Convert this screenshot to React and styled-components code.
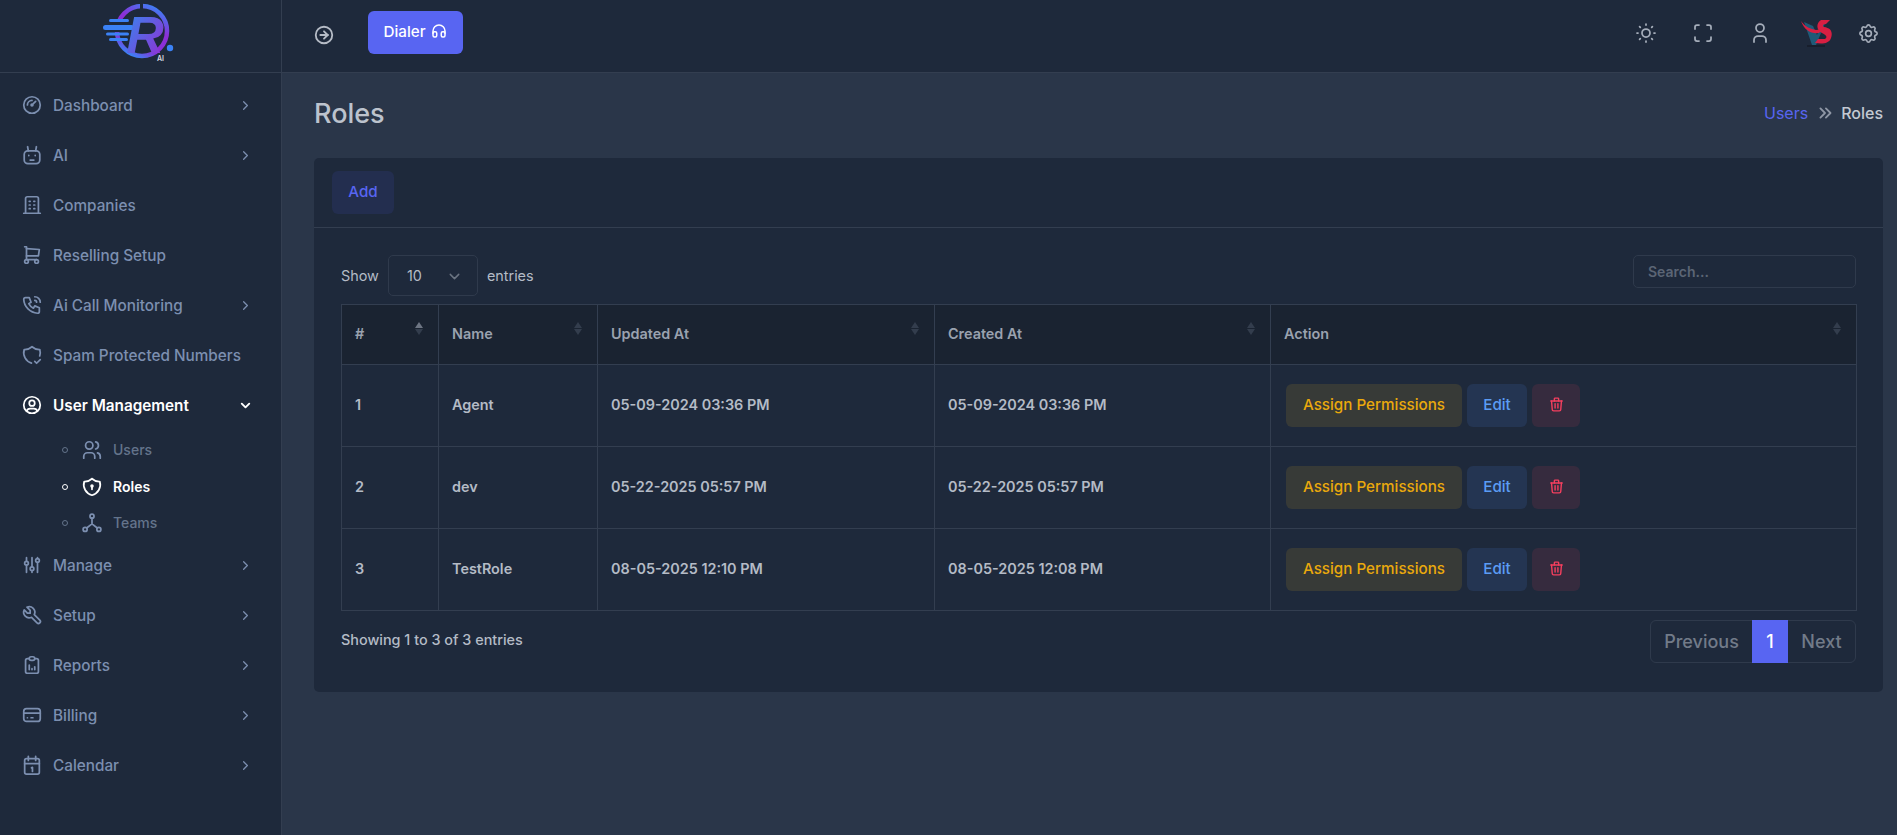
import styled, { createGlobalStyle } from "styled-components";
import {
  TbGauge,
  TbBuilding,
  TbShoppingCart,
  TbPhoneCall,
  TbShieldCheck,
  TbUserCircle,
  TbUsers,
  TbShieldLock,
  TbAdjustments,
  TbTool,
  TbReportAnalytics,
  TbCreditCard,
  TbChevronRight,
  TbChevronDown,
  TbChevronsRight,
  TbCircleArrowRight,
  TbHeadphones,
  TbSun,
  TbMaximize,
  TbUser,
  TbSettings,
  TbTrash,
} from "react-icons/tb";

const GlobalStyle = createGlobalStyle`
  html, body {
    margin: 0;
    padding: 0;
    background: #2a3649;
    font-family: "Inter", "Liberation Sans", sans-serif;
  }
  * { box-sizing: border-box; }
`;

const Shell = styled.div`
  display: grid;
  grid-template-columns: 282px 1fr;
  height: 835px;
  overflow: hidden;
`;

const Sidebar = styled.aside`
  background: #1e293b;
  border-right: 1px solid #333e50;
  display: flex;
  flex-direction: column;
`;

const Brand = styled.div`
  height: 73px;
  flex: none;
  border-bottom: 1px solid #333e50;
  display: flex;
  justify-content: center;
  padding-top: 3px;
`;

const Nav = styled.nav`
  padding-top: 7px;
  display: flex;
  flex-direction: column;
`;

const NavItem = styled.div`
  height: 50px;
  display: flex;
  align-items: center;
  padding: 0 28px 0 21px;
  color: ${(props) => (props.$active ? "#ffffff" : "#7c8fb0")};
  font-size: 15.3px;
  font-weight: ${(props) => (props.$active ? 600 : 500)};
  svg.lead {
    width: 22px;
    height: 22px;
    flex: none;
    margin-right: 10px;
    stroke-width: 1.9;
  }
`;

const NavLabel = styled.span`
  flex: 1;
`;

const SubList = styled.div`
  height: 110px;
  display: grid;
  grid-template-rows: 37px 37px 1fr;
  padding: 1px 0 0 62px;
`;

const SubItem = styled.div`
  display: flex;
  align-items: center;
  color: ${(props) => (props.$active ? "#ffffff" : "#64748b")};
  font-size: 14px;
  font-weight: ${(props) => (props.$active ? 600 : 500)};
  svg {
    width: 22px;
    height: 22px;
    margin-right: 10px;
    stroke-width: 1.9;
    color: ${(props) => (props.$active ? "#ffffff" : "#7c8fb0")};
  }
`;

const Dot = styled.span`
  width: 6px;
  height: 6px;
  border-radius: 50%;
  border: 1px solid currentColor;
  margin-right: 13px;
`;

const Main = styled.main`
  display: flex;
  flex-direction: column;
  min-width: 0;
`;

const Topbar = styled.header`
  height: 73px;
  flex: none;
  background: #1e293b;
  border-bottom: 1px solid #333e50;
  display: flex;
  align-items: flex-start;
  padding-left: 31px;
`;

const ToggleButton = styled.div`
  color: #b6bcc6;
  margin-top: 24px;
  margin-right: 33px;
  display: flex;
  svg {
    width: 22px;
    height: 22px;
    stroke-width: 2;
  }
`;

const DialerButton = styled.button`
  margin-top: 11px;
  width: 95px;
  height: 43px;
  background: #5865f2;
  border: none;
  border-radius: 6px;
  color: #ffffff;
  font: 500 15.2px "Inter", sans-serif;
  display: flex;
  align-items: center;
  justify-content: center;
  gap: 4px;
  padding-bottom: 4px;
  svg {
    width: 18px;
    height: 18px;
  }
`;

const TopActions = styled.div`
  margin-left: auto;
  display: flex;
  align-items: center;
  height: 66px;
  padding-right: 19px;
  color: #a5adba;
`;

const TopIcon = styled.div`
  width: 57px;
  display: flex;
  justify-content: center;
  svg {
    flex: none;
    stroke-width: 1.75;
  }
`;

const GearIcon = styled(TopIcon)`
  width: 20px;
  margin-left: 13px;
`;

const Content = styled.div`
  flex: 1;
  padding: 0 14px 0 32px;
`;

const PageHead = styled.div`
  height: 85px;
  display: flex;
  align-items: center;
  justify-content: space-between;
  padding-bottom: 5px;
`;

const Title = styled.h1`
  margin: 0;
  font-size: 27px;
  font-weight: 500;
  color: #bcc3cd;
`;

const Crumbs = styled.div`
  display: flex;
  align-items: center;
  font-size: 16px;
  font-weight: 500;
  color: #c3c9d2;
`;

const CrumbLink = styled.span`
  color: #5865f2;
  font-weight: 400;
`;

const CrumbSep = styled.span`
  display: flex;
  margin: 0 5px 0 6px;
  color: #8f97a5;
  svg {
    width: 22px;
    height: 22px;
  }
`;

const Card = styled.section`
  height: 534px;
  background: #1e293b;
  border-radius: 5px;
`;

const CardTop = styled.div`
  height: 70px;
  border-bottom: 1px solid #333e50;
  padding: 13px 18px;
`;

const SoftButton = styled.button`
  height: 43px;
  width: ${(props) => props.$w}px;
  padding: 0 0 2px;
  border: none;
  border-radius: 6px;
  background: ${(props) => props.$bg};
  color: ${(props) => props.$fg};
  font: 500 15.2px "Inter", sans-serif;
  display: inline-flex;
  align-items: center;
  justify-content: center;
  flex: none;
  svg {
    width: 17px;
    height: 17px;
  }
`;

const CardBody = styled.div`
  padding: 27px 27px 0;
`;

const Controls = styled.div`
  height: 49px;
  display: flex;
  justify-content: space-between;
  align-items: flex-start;
`;

const LengthControl = styled.label`
  display: flex;
  align-items: center;
  height: 41px;
  gap: 9px;
  font-size: 14.4px;
  color: #b4bbc6;
`;

const Select = styled.div`
  width: 90px;
  height: 41px;
  border: 1px solid #2f3a4c;
  border-radius: 5px;
  display: flex;
  align-items: center;
  justify-content: space-between;
  padding: 0 14px 0 18px;
  color: #b4bbc6;
  svg {
    width: 17px;
    height: 17px;
    color: #6b7482;
    margin-top: 2px;
  }
`;

const SearchBox = styled.input`
  width: 223px;
  height: 33px;
  background: transparent;
  border: 1px solid #2f3a4c;
  border-radius: 5px;
  padding: 0 14px;
  font: 600 14px "Inter", sans-serif;
  color: #b4bbc6;
  &::placeholder {
    color: #5b6575;
    opacity: 1;
  }
`;

const Table = styled.table`
  width: 1515px;
  border-collapse: collapse;
  table-layout: fixed;
  font-size: 14.4px;
`;

const Th = styled.th`
  position: relative;
  height: 60px;
  padding: 0 13px 2px;
  text-align: left;
  font-weight: 600;
  color: #9aa2af;
  background: #1a2331;
  border: 1px solid #333e50;
`;

const SortMark = styled.span`
  position: absolute;
  right: 15px;
  top: 17px;
  display: flex;
  flex-direction: column;
  gap: 1px;
`;

const Arrow = styled.i`
  width: 0;
  height: 0;
  border-left: 4.5px solid transparent;
  border-right: 4.5px solid transparent;
  ${(props) => (props.$up ? "border-bottom" : "border-top")}: 6px solid
    ${(props) => (props.$on ? "#6d7583" : "#333d4d")};
`;

const Td = styled.td`
  height: 82px;
  padding: 0 13px 2px;
  font-weight: 600;
  color: #b4bbc6;
  border: 1px solid #333e50;
`;

const ActionCell = styled(Td)`
  padding: 0 15px;
`;

const ActionRow = styled.div`
  display: flex;
  gap: 5px;
  padding-bottom: 1px;
`;

const TableFooter = styled.div`
  display: flex;
  justify-content: space-between;
  align-items: flex-start;
  padding-top: 9px;
  font-size: 14.4px;
  font-weight: 500;
  color: #b4bbc6;
`;

const EntriesNote = styled.div`
  padding-top: 11px;
`;

const Pager = styled.div`
  height: 43px;
  display: flex;
  border: 1px solid #2f3a4c;
  border-radius: 6px;
  font-size: 18px;
  font-weight: 500;
  color: #727b89;
`;

const PageCell = styled.div`
  height: 43px;
  margin-top: -1px;
  padding-bottom: 1px;
  width: ${(props) => props.$w}px;
  display: flex;
  align-items: center;
  justify-content: center;
  background: ${(props) => (props.$on ? "#5865f2" : "transparent")};
  color: ${(props) => (props.$on ? "#ffffff" : "inherit")};
`;

const Logo = () => (
  <svg width="76" height="62" viewBox="0 0 76 62">
    <defs>
      <linearGradient id="ringGrad" x1="0.8" y1="0" x2="0.3" y2="1">
        <stop offset="0" stopColor="#3b82f6" />
        <stop offset="0.4" stopColor="#8b2fd6" />
        <stop offset="0.75" stopColor="#8b2fd6" />
        <stop offset="1" stopColor="#3b82f6" />
      </linearGradient>
      <linearGradient id="letterGrad" x1="0" y1="0" x2="1" y2="1">
        <stop offset="0" stopColor="#2f8cf0" />
        <stop offset="1" stopColor="#9a28d0" />
      </linearGradient>
    </defs>
    <circle cx="39" cy="28" r="25" fill="none" stroke="url(#ringGrad)" strokeWidth="4.5" />
    <rect x="37" y="0" width="3" height="8" fill="#1e293b" />
    <rect x="0" y="19" width="33" height="10" fill="#1e293b" />
    <rect x="0" y="22" width="31" height="5" rx="2.5" fill="#3b82f6" />
    <rect x="6" y="16" width="20" height="3" rx="1.5" fill="#3b82f6" />
    <rect x="3" y="29.5" width="23" height="3" rx="1.5" fill="#3b82f6" />
    <rect x="6" y="35" width="19" height="3" rx="1.5" fill="#3b82f6" />
    <text x="42" y="50" textAnchor="middle" fontFamily="Liberation Sans" fontStyle="italic" fontWeight="700" fontSize="52" fill="url(#letterGrad)">
      R
    </text>
    <circle cx="67" cy="45" r="3.2" fill="#3b82f6" />
    <text x="54" y="58" fontFamily="Inter" fontWeight="600" fontSize="7" fill="#d8dce3">
      AI
    </text>
  </svg>
);

const VsLogo = () => (
  <svg width="31" height="30" viewBox="0 0 31 30">
    <path d="M3 4 L12 8 L16 17 L21 3 L25 3 L15 27 L11 27 Z" fill="#1f5a78" />
    <path d="M0 3 C4 9 10 11 15 12 L22 11 L18 15 C10 16 3 12 0 3 Z" fill="#d81f42" />
    <path d="M20 2 L29 2 L25 6 C22 6 21 8 23 9 C30 10 32 14 30 20 C28 26 21 26 14 25 L17 21 L24 21 C27 19 25 17 21 15 C15 12 15 5 20 2 Z" fill="#d81f42" />
    <path d="M6 28 H24" stroke="#10151f" strokeWidth="1" />
  </svg>
);

const RobotIcon = (props) => (
  <svg viewBox="0 0 24 24" fill="none" stroke="currentColor" strokeWidth="2" strokeLinecap="round" strokeLinejoin="round" {...props}>
    <rect x="3.5" y="7.5" width="17" height="14" rx="4" />
    <path d="M8 7.5L7.2 3M16 7.5L16.8 3M10 17.5H14M8.5 12.5V12.6M15.5 12.5V12.6" />
  </svg>
);

const TeamsIcon = () => (
  <svg viewBox="0 0 24 24" fill="none" stroke="currentColor" strokeWidth="2" strokeLinecap="round" strokeLinejoin="round">
    <circle cx="12" cy="4.5" r="2.2" />
    <circle cx="4.5" cy="19" r="2.2" />
    <circle cx="19.5" cy="19" r="2.2" />
    <path d="M12 6.7V13M12 13L6.2 17.5M12 13L17.8 17.5" />
  </svg>
);

const CalendarIcon = (props) => (
  <svg viewBox="0 0 24 24" fill="none" stroke="currentColor" strokeWidth="2" strokeLinecap="round" strokeLinejoin="round" {...props}>
    <rect x="4" y="5" width="16" height="17" rx="2" />
    <path d="M16 2.5V7M8 2.5V7M4 10.5H20M11.5 15L12.5 14.5V19" />
  </svg>
);

const navTop = [
  { label: "Dashboard", icon: TbGauge, arrow: true },
  { label: "AI", icon: RobotIcon, arrow: true },
  { label: "Companies", icon: TbBuilding },
  { label: "Reselling Setup", icon: TbShoppingCart },
  { label: "Ai Call Monitoring", icon: TbPhoneCall, arrow: true },
  { label: "Spam Protected Numbers", icon: TbShieldCheck },
];

const navBottom = [
  { label: "Manage", icon: TbAdjustments, arrow: true },
  { label: "Setup", icon: TbTool, arrow: true },
  { label: "Reports", icon: TbReportAnalytics, arrow: true },
  { label: "Billing", icon: TbCreditCard, arrow: true },
  { label: "Calendar", icon: CalendarIcon, arrow: true },
];

const ChevronSmall = styled(TbChevronRight)`
  width: 15px;
  height: 15px;
`;

const ChevronOpen = styled(TbChevronDown)`
  width: 15px;
  height: 15px;
  stroke-width: 3;
`;

const SideLink = ({ item }) => (
  <NavItem>
    <item.icon className="lead" />
    <NavLabel>{item.label}</NavLabel>
    {item.arrow && <ChevronSmall />}
  </NavItem>
);

const columns = [
  { name: "#", width: 97, on: true },
  { name: "Name", width: 159 },
  { name: "Updated At", width: 337 },
  { name: "Created At", width: 336 },
  { name: "Action", width: 586 },
];

const roles = [
  { id: 1, name: "Agent", updated: "05-09-2024 03:36 PM", created: "05-09-2024 03:36 PM" },
  { id: 2, name: "dev", updated: "05-22-2025 05:57 PM", created: "05-22-2025 05:57 PM" },
  { id: 3, name: "TestRole", updated: "08-05-2025 12:10 PM", created: "08-05-2025 12:08 PM" },
];

export default function App() {
  return (
    <>
      <GlobalStyle />
      <Shell>
        <Sidebar>
          <Brand>
            <Logo />
          </Brand>
          <Nav>
            {navTop.map((item) => (
              <SideLink key={item.label} item={item} />
            ))}
            <NavItem $active>
              <TbUserCircle className="lead" />
              <NavLabel>User Management</NavLabel>
              <ChevronOpen />
            </NavItem>
            <SubList>
              <SubItem>
                <Dot />
                <TbUsers />
                Users
              </SubItem>
              <SubItem $active>
                <Dot />
                <TbShieldLock />
                Roles
              </SubItem>
              <SubItem>
                <Dot />
                <TeamsIcon />
                Teams
              </SubItem>
            </SubList>
            {navBottom.map((item) => (
              <SideLink key={item.label} item={item} />
            ))}
          </Nav>
        </Sidebar>
        <Main>
          <Topbar>
            <ToggleButton>
              <TbCircleArrowRight />
            </ToggleButton>
            <DialerButton>
              Dialer <TbHeadphones />
            </DialerButton>
            <TopActions>
              <TopIcon>
                <TbSun size={24} />
              </TopIcon>
              <TopIcon>
                <TbMaximize size={24} />
              </TopIcon>
              <TopIcon>
                <TbUser size={24} />
              </TopIcon>
              <TopIcon>
                <VsLogo />
              </TopIcon>
              <GearIcon>
                <TbSettings size={23} />
              </GearIcon>
            </TopActions>
          </Topbar>
          <Content>
            <PageHead>
              <Title>Roles</Title>
              <Crumbs>
                <CrumbLink>Users</CrumbLink>
                <CrumbSep>
                  <TbChevronsRight />
                </CrumbSep>
                Roles
              </Crumbs>
            </PageHead>
            <Card>
              <CardTop>
                <SoftButton $w={62} $bg="#232e4f" $fg="#5865f2">
                  Add
                </SoftButton>
              </CardTop>
              <CardBody>
                <Controls>
                  <LengthControl>
                    Show
                    <Select>
                      10
                      <TbChevronDown />
                    </Select>
                    entries
                  </LengthControl>
                  <SearchBox placeholder="Search..." />
                </Controls>
                <Table>
                  <colgroup>
                    {columns.map((col) => (
                      <col key={col.name} style={{ width: col.width }} />
                    ))}
                  </colgroup>
                  <thead>
                    <tr>
                      {columns.map((col) => (
                        <Th key={col.name}>
                          {col.name}
                          <SortMark>
                            <Arrow $up $on={col.on} />
                            <Arrow />
                          </SortMark>
                        </Th>
                      ))}
                    </tr>
                  </thead>
                  <tbody>
                    {roles.map((role) => (
                      <tr key={role.id}>
                        <Td>{role.id}</Td>
                        <Td>{role.name}</Td>
                        <Td>{role.updated}</Td>
                        <Td>{role.created}</Td>
                        <ActionCell>
                          <ActionRow>
                            <SoftButton $w={176} $bg="#373a37" $fg="#eaa90c">
                              Assign Permissions
                            </SoftButton>
                            <SoftButton $w={60} $bg="#243552" $fg="#5b9cf5">
                              Edit
                            </SoftButton>
                            <SoftButton $w={48} $bg="#362b3e" $fg="#f43f5e">
                              <TbTrash />
                            </SoftButton>
                          </ActionRow>
                        </ActionCell>
                      </tr>
                    ))}
                  </tbody>
                </Table>
                <TableFooter>
                  <EntriesNote>Showing 1 to 3 of 3 entries</EntriesNote>
                  <Pager>
                    <PageCell $w={101}>Previous</PageCell>
                    <PageCell $w={36} $on>
                      1
                    </PageCell>
                    <PageCell $w={67}>Next</PageCell>
                  </Pager>
                </TableFooter>
              </CardBody>
            </Card>
          </Content>
        </Main>
      </Shell>
    </>
  );
}
